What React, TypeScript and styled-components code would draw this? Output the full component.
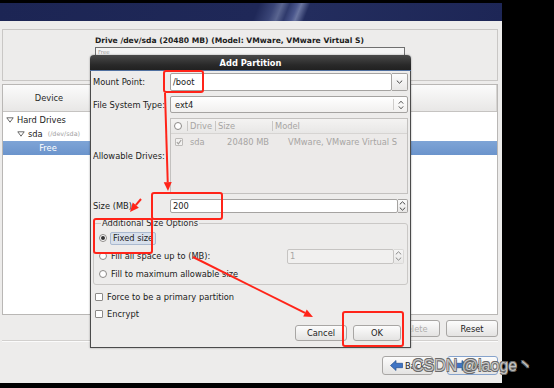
import React from 'react';
import styled, { createGlobalStyle } from 'styled-components';

const GlobalStyle = createGlobalStyle`
  html, body { margin: 0; padding: 0; background: #000; }
  body {
    font-family: "DejaVu Sans", "Noto Sans", sans-serif;
    font-size: 8.3px;
    color: #1c1c1c;
  }
  #root { width: 554px; height: 388px; }
  * { box-sizing: border-box; }
`;

const Stage = styled.div`
  position: relative;
  width: 554px;
  height: 388px;
  background: #000;
  padding-top: 3px;
  overflow: hidden;
`;

const Screen = styled.div`
  width: 502px;
  height: 380px;
  background: #edeceb;
  display: flex;
  flex-direction: column;
`;

const Banner = styled.div`
  height: 18px;
  flex: none;
  background: linear-gradient(
    112deg,
    #1c2554 0%,
    #1f2858 51%,
    #3a4577 54%,
    #5a6590 55.5%,
    #2f3a6c 57%,
    #4a568c 58.5%,
    #6a75a0 59.3%,
    #232d5e 61%,
    #1d2656 100%
  );
`;

const Main = styled.div`
  flex: 1;
  display: flex;
  flex-direction: column;
  padding: 8px 4px 0 2px;
`;

const DrivePanel = styled.div`
  height: 52px;
  border: 1px solid #c9c7c5;
  display: flex;
  justify-content: center;
  padding-top: 6px;
`;

const DriveInner = styled.div`
  width: 310px;
  display: flex;
  flex-direction: column;
`;

const DriveTitle = styled.div`
  font-weight: bold;
  font-size: 7.6px;
  line-height: 10px;
  white-space: nowrap;
`;

const DriveBar = styled.div`
  margin-top: 1px;
  height: 26px;
  border: 1px solid #6f6f6f;
  background: #f4f4f4;
  color: #9a9a9a;
  font-size: 5.5px;
  padding: 1px 2px;
`;

const DeviceBox = styled.div`
  margin-top: 3px;
  height: 231px;
  border: 1px solid #b9b7b5;
  background: #fff;
  display: flex;
  flex-direction: column;
`;

const ListHeader = styled.div`
  height: 27px;
  flex: none;
  display: flex;
  background: linear-gradient(#fbfbfb, #e8e7e6);
  border-bottom: 1px solid #c5c3c1;
`;

const HeaderCell = styled.div<{ $w?: number }>`
  width: ${(p) => (p.$w ? `${p.$w}px` : 'auto')};
  flex: ${(p) => (p.$w ? 'none' : '1')};
  display: flex;
  align-items: center;
  justify-content: center;
  color: #2a2a2a;
  border-right: 1px solid #d6d4d2;
`;

const ListBody = styled.div`
  padding-top: 1px;
  display: flex;
  flex-direction: column;
`;

const TreeRow = styled.div<{ $indent: number; $selected?: boolean }>`
  height: 14px;
  display: flex;
  align-items: center;
  padding-left: ${(p) => p.$indent}px;
  gap: 3px;
  background: ${(p) => (p.$selected ? 'linear-gradient(#7ea4d6, #6b94cc)' : 'transparent')};
  color: ${(p) => (p.$selected ? '#fff' : '#1c1c1c')};
`;

const SelectedText = styled.span`
  width: 90px;
  text-align: center;
`;

const DevHint = styled.span`
  color: #a2a2a2;
  font-size: 6.4px;
  margin-left: 2px;
`;

const ButtonRow = styled.div<{ $top: number; $gap: number }>`
  margin-top: ${(p) => p.$top}px;
  display: flex;
  justify-content: flex-end;
  gap: ${(p) => p.$gap}px;
`;

const Separator = styled.div`
  margin-top: 3px;
  height: 2px;
  border-top: 1px solid #d2d0ce;
  border-bottom: 1px solid #fbfbfb;
`;

const Btn = styled.button<{ $w: number; $h: number; $def?: boolean; $dis?: boolean }>`
  width: ${(p) => p.$w}px;
  height: ${(p) => p.$h}px;
  margin: 0;
  padding: 0;
  border: 1px solid ${(p) => (p.$def ? '#86a3cc' : '#a8a6a4')};
  border-radius: 3px;
  background: linear-gradient(#fcfcfc, #e4e3e2);
  color: ${(p) => (p.$dis ? '#b0aeac' : '#1c1c1c')};
  font: inherit;
  display: flex;
  align-items: center;
  justify-content: center;
  gap: 2px;
`;

/* ---------- Dialog ---------- */

const Dialog = styled.div`
  position: absolute;
  left: 90px;
  top: 55px;
  width: 321px;
  height: 293px;
  display: flex;
  flex-direction: column;
  box-shadow: 0 0 2px rgba(0, 0, 0, 0.4);
  border-radius: 4px 4px 0 0;
`;

const TitleBar = styled.div`
  height: 16px;
  flex: none;
  border-radius: 4px 4px 0 0;
  background: linear-gradient(#4a4a4a, #2a2a2a 60%, #1f1f1f);
  box-shadow: inset 0 -1px #4f6f9f;
  color: #fff;
  font-weight: bold;
  display: flex;
  align-items: center;
  justify-content: center;
`;

const DialogBody = styled.div`
  flex: 1;
  background: #edeceb;
  border: 1px solid #4b4b4b;
  border-top: none;
  padding: 2px 2px 6px 2px;
  display: flex;
  flex-direction: column;
`;

const FormGrid = styled.div`
  display: grid;
  grid-template-columns: 77px 238px;
  grid-template-rows: 18px 17px 76px 14px;
  row-gap: 5px;
`;

const FieldLabel = styled.div`
  align-self: center;
  white-space: nowrap;
  overflow: hidden;
`;

const ComboWrap = styled.div`
  display: flex;
`;

const Entry = styled.div<{ $dis?: boolean }>`
  flex: 1;
  height: 100%;
  background: ${(p) => (p.$dis ? '#f1f0ef' : '#fff')};
  border: 1px solid ${(p) => (p.$dis ? '#c6c4c2' : '#a5a3a1')};
  border-radius: 2px;
  display: flex;
  align-items: center;
  padding-left: 2px;
  color: ${(p) => (p.$dis ? '#a9a7a5' : '#1c1c1c')};
`;

const ComboBtn = styled.div`
  width: 16px;
  border: 1px solid #a5a3a1;
  border-left: none;
  border-radius: 0 2px 2px 0;
  background: linear-gradient(#fcfcfc, #e9e8e7);
  display: flex;
  align-items: center;
  justify-content: center;
`;

const Combo = styled.div`
  display: flex;
  border: 1px solid #a5a3a1;
  border-radius: 2px;
  background: linear-gradient(#ffffff, #f1f0ef);
`;

const ComboText = styled.div`
  flex: 1;
  display: flex;
  align-items: center;
  padding-left: 4px;
`;

const ComboArrow = styled.div`
  width: 14px;
  border-left: 1px solid #cfcdcb;
  margin: 2px 0;
  display: flex;
  align-items: center;
  justify-content: center;
`;

const DriveTable = styled.div`
  border: 1px solid #c3c1bf;
  background: #eceae9;
  display: flex;
  flex-direction: column;
  color: #a7a5a3;
`;

const TableHead = styled.div`
  height: 15px;
  display: flex;
  background: linear-gradient(#f4f3f2, #e8e7e6);
  border-bottom: 1px solid #d6d4d2;
`;

const TableRow = styled.div`
  height: 15px;
  display: flex;
`;

const TCell = styled.div<{ $w?: number; $right?: boolean; $pl?: number; $sep?: boolean }>`
  width: ${(p) => (p.$w ? `${p.$w}px` : 'auto')};
  flex: ${(p) => (p.$w ? 'none' : '1')};
  display: flex;
  align-items: center;
  justify-content: ${(p) => (p.$right ? 'flex-end' : 'flex-start')};
  padding-left: ${(p) => p.$pl ?? 2}px;
  padding-right: ${(p) => (p.$right ? 5 : 0)}px;
  border-right: ${(p) => (p.$sep ? '1px solid #c9c7c5' : 'none')};
  white-space: nowrap;
  overflow: hidden;
  margin: ${(p) => (p.$sep ? '2px 0' : '0')};
`;

const SpinWrap = styled.div<{ $w?: number; $h?: number; $push?: boolean }>`
  display: flex;
  width: ${(p) => (p.$w ? `${p.$w}px` : 'auto')};
  height: ${(p) => (p.$h ? `${p.$h}px` : 'auto')};
  margin-left: ${(p) => (p.$push ? 'auto' : '0')};
`;

const SpinBtns = styled.div<{ $dis?: boolean }>`
  width: 10px;
  display: flex;
  flex-direction: column;
  border: 1px solid ${(p) => (p.$dis ? '#cfcdcb' : '#a5a3a1')};
  border-left: none;
  border-radius: 0 2px 2px 0;
  background: linear-gradient(#fbfbfb, #e7e6e5);
  opacity: ${(p) => (p.$dis ? 0.6 : 1)};
`;

const SpinHalf = styled.div`
  flex: 1;
  display: flex;
  align-items: center;
  justify-content: center;
`;

const Frame = styled.fieldset`
  margin: 4px 0 0 0;
  padding: 0 3px 0 5px;
  width: 315px;
  min-width: 0;
  border: 1px solid #cac8c6;
  border-radius: 3px;
  height: 68px;
`;

const Legend = styled.legend`
  padding: 0 1px;
  margin-left: 2px;
  line-height: 12px;
  color: #2a2a2a;
`;

const OptionRow = styled.div`
  height: 18px;
  display: flex;
  align-items: center;
`;

const Radio = styled.span<{ $on?: boolean }>`
  width: 8px;
  height: 8px;
  border-radius: 50%;
  border: 1px solid #8c8a88;
  background: #fff;
  display: inline-flex;
  align-items: center;
  justify-content: center;
  margin-right: 3px;
  flex: none;
  &::after {
    content: '';
    width: 4px;
    height: 4px;
    border-radius: 50%;
    background: ${(p) => (p.$on ? '#333' : 'transparent')};
  }
`;

const FocusLabel = styled.span`
  background: #d8e0eb;
  border: 1px solid #aab9cf;
  border-radius: 2px;
  padding: 0 2px;
  line-height: 11px;
`;

const PlainLabel = styled.span`
  padding-left: 1px;
`;

const CheckRow = styled.div<{ $top?: number }>`
  height: 17px;
  margin-top: ${(p) => p.$top ?? 0}px;
  display: flex;
  align-items: center;
  padding-left: 2px;
  gap: 4px;
`;

const CheckBox = styled.span<{ $dis?: boolean }>`
  width: 8px;
  height: 8px;
  border: 1px solid ${(p) => (p.$dis ? '#bdbbb9' : '#8c8a88')};
  background: ${(p) => (p.$dis ? '#f2f1f0' : '#fff')};
  border-radius: 1px;
  flex: none;
  display: inline-flex;
  align-items: center;
  justify-content: center;
`;

const DialogButtons = styled.div`
  margin-top: auto;
  display: flex;
  justify-content: flex-end;
  gap: 6px;
  padding-right: 7px;
`;

/* ---------- overlays ---------- */

const Annotations = styled.svg`
  position: absolute;
  left: 0;
  top: 0;
  pointer-events: none;
`;

const Watermark = styled.div`
  position: absolute;
  left: 412px;
  top: 357px;
  font-family: "Liberation Sans", "Noto Sans CJK SC", sans-serif;
  font-size: 16px;
  line-height: 18px;
  color: rgba(205, 205, 205, 0.92);
  text-shadow: 0.6px 0.6px 0 #6a6a6a, -0.6px -0.6px 0 #6a6a6a, 0.6px -0.6px 0 #6a6a6a, -0.6px 0.6px 0 #6a6a6a;
  white-space: nowrap;
`;

/* ---------- icons ---------- */

const Chevron = ({ up }: { up?: boolean }) => (
  <svg width="7" height="4" viewBox="0 0 7 4">
    <path d={up ? 'M0.8 3.4 L3.5 0.8 L6.2 3.4' : 'M0.8 0.6 L3.5 3.2 L6.2 0.6'} fill="none" stroke="#444" strokeWidth="1" />
  </svg>
);

const UpDown = () => (
  <svg width="6" height="10" viewBox="0 0 6 10">
    <path d="M0.8 3.6 L3 1.2 L5.2 3.6 M0.8 6.4 L3 8.8 L5.2 6.4" fill="none" stroke="#555" strokeWidth="1" />
  </svg>
);

const Expander = () => (
  <svg width="8" height="6" viewBox="0 0 8 6">
    <path d="M0.8 0.8 H7.2 L4 5.2 Z" fill="#fff" stroke="#5a5a5a" strokeWidth="0.9" />
  </svg>
);

const Tick = () => (
  <svg width="6" height="6" viewBox="0 0 6 6">
    <path d="M0.8 3.2 L2.4 4.8 L5.2 1" fill="none" stroke="#a09e9c" strokeWidth="1.1" />
  </svg>
);

const Arrow = ({ dir }: { dir: 'left' | 'right' }) => (
  <svg width="13" height="11" viewBox="0 0 13 11">
    <g transform={dir === 'left' ? '' : 'translate(13,0) scale(-1,1)'}>
      <path d="M0.5 5.5 L6 0.5 V3.3 H12.5 V7.7 H6 V10.5 Z" fill="#3f74c4" stroke="#24508f" strokeWidth="0.7" />
    </g>
  </svg>
);

const RED = '#ff2419';

const ArrowHead = ({ x1, y1, x2, y2 }: { x1: number; y1: number; x2: number; y2: number }) => {
  const ang = Math.atan2(y2 - y1, x2 - x1);
  const len = 9;
  const half = 4;
  const bx = x2 - Math.cos(ang) * len;
  const by = y2 - Math.sin(ang) * len;
  const px = -Math.sin(ang) * half;
  const py = Math.cos(ang) * half;
  return (
    <g>
      <line x1={x1} y1={y1} x2={bx} y2={by} stroke={RED} strokeWidth="2" />
      <polygon points={`${x2},${y2} ${bx + px},${by + py} ${bx - px},${by - py}`} fill={RED} />
    </g>
  );
};

export default function App() {
  return (
    <>
      <GlobalStyle />
      <Stage>
        <Screen>
          <Banner />
          <Main>
            <DrivePanel>
              <DriveInner>
                <DriveTitle>Drive /dev/sda (20480 MB) (Model: VMware, VMware Virtual S)</DriveTitle>
                <DriveBar>Free</DriveBar>
              </DriveInner>
            </DrivePanel>

            <DeviceBox>
              <ListHeader>
                <HeaderCell $w={93}>Device</HeaderCell>
                <HeaderCell $w={90}>Size (MB)</HeaderCell>
                <HeaderCell $w={80}>Mount Point</HeaderCell>
                <HeaderCell $w={60}>Type</HeaderCell>
                <HeaderCell $w={60}>Format</HeaderCell>
                <HeaderCell />
              </ListHeader>
              <ListBody>
                <TreeRow $indent={3}>
                  <Expander />
                  <span>Hard Drives</span>
                </TreeRow>
                <TreeRow $indent={14}>
                  <Expander />
                  <span>sda</span>
                  <DevHint>(/dev/sda)</DevHint>
                </TreeRow>
                <TreeRow $indent={0} $selected>
                  <SelectedText>Free</SelectedText>
                </TreeRow>
              </ListBody>
            </DeviceBox>

            <ButtonRow $top={5} $gap={6}>
              <Btn $w={52} $h={17}>Create</Btn>
              <Btn $w={52} $h={17}>Edit</Btn>
              <Btn $w={52} $h={17} $dis>Delete</Btn>
              <Btn $w={52} $h={17}>Reset</Btn>
            </ButtonRow>

            <Separator />

            <ButtonRow $top={14} $gap={14}>
              <Btn $w={51} $h={19}>
                <Arrow dir="left" />
                <span>Back</span>
              </Btn>
              <Btn $w={51} $h={19} $def>
                <Arrow dir="right" />
                <span>Next</span>
              </Btn>
            </ButtonRow>
          </Main>
        </Screen>

        <Dialog>
          <TitleBar>Add Partition</TitleBar>
          <DialogBody>
            <FormGrid>
              <FieldLabel>Mount Point:</FieldLabel>
              <ComboWrap>
                <Entry>/boot</Entry>
                <ComboBtn>
                  <Chevron />
                </ComboBtn>
              </ComboWrap>

              <FieldLabel>File System Type:</FieldLabel>
              <Combo>
                <ComboText>ext4</ComboText>
                <ComboArrow>
                  <UpDown />
                </ComboArrow>
              </Combo>

              <FieldLabel>Allowable Drives:</FieldLabel>
              <DriveTable>
                <TableHead>
                  <TCell $w={17} $pl={3} $sep>
                    <Radio />
                  </TCell>
                  <TCell $w={28} $sep>Drive</TCell>
                  <TCell $w={57} $sep>Size</TCell>
                  <TCell>Model</TCell>
                </TableHead>
                <TableRow>
                  <TCell $w={18} $pl={4}>
                    <CheckBox $dis>
                      <Tick />
                    </CheckBox>
                  </TCell>
                  <TCell $w={28} $pl={1}>sda</TCell>
                  <TCell $w={57} $right>20480 MB</TCell>
                  <TCell $pl={14}>VMware, VMware Virtual S</TCell>
                </TableRow>
              </DriveTable>

              <FieldLabel>Size (MB):</FieldLabel>
              <SpinWrap>
                <Entry>200</Entry>
                <SpinBtns>
                  <SpinHalf>
                    <Chevron up />
                  </SpinHalf>
                  <SpinHalf>
                    <Chevron />
                  </SpinHalf>
                </SpinBtns>
              </SpinWrap>
            </FormGrid>

            <Frame>
              <Legend>Additional Size Options</Legend>
              <OptionRow>
                <Radio $on />
                <FocusLabel>Fixed size</FocusLabel>
              </OptionRow>
              <OptionRow>
                <Radio />
                <PlainLabel>Fill all space up to (MB):</PlainLabel>
                <SpinWrap $w={117} $h={15} $push>
                  <Entry $dis>1</Entry>
                  <SpinBtns $dis>
                    <SpinHalf>
                      <Chevron up />
                    </SpinHalf>
                    <SpinHalf>
                      <Chevron />
                    </SpinHalf>
                  </SpinBtns>
                </SpinWrap>
              </OptionRow>
              <OptionRow>
                <Radio />
                <PlainLabel>Fill to maximum allowable size</PlainLabel>
              </OptionRow>
            </Frame>

            <CheckRow $top={3}>
              <CheckBox />
              <span>Force to be a primary partition</span>
            </CheckRow>
            <CheckRow>
              <CheckBox />
              <span>Encrypt</span>
            </CheckRow>

            <DialogButtons>
              <Btn $w={52} $h={16}>Cancel</Btn>
              <Btn $w={48} $h={16}>OK</Btn>
            </DialogButtons>
          </DialogBody>
        </Dialog>

        <Annotations width="554" height="388" viewBox="0 0 554 388">
          <g fill="none" stroke={RED} strokeWidth="2">
            <rect x="164" y="71" width="39" height="21" rx="2" />
            <rect x="152" y="193" width="70" height="26" rx="2" />
            <rect x="94" y="219" width="58" height="34" rx="2" />
            <rect x="343" y="312" width="60" height="34" rx="2" />
          </g>
          <ArrowHead x1={165} y1={93} x2={168} y2={191} />
          <ArrowHead x1={141} y1={199} x2={130} y2={212} />
          <ArrowHead x1={193} y1={257} x2={313} y2={317} />
        </Annotations>

        <Watermark>CSDN @laoge丶</Watermark>
      </Stage>
    </>
  );
}
